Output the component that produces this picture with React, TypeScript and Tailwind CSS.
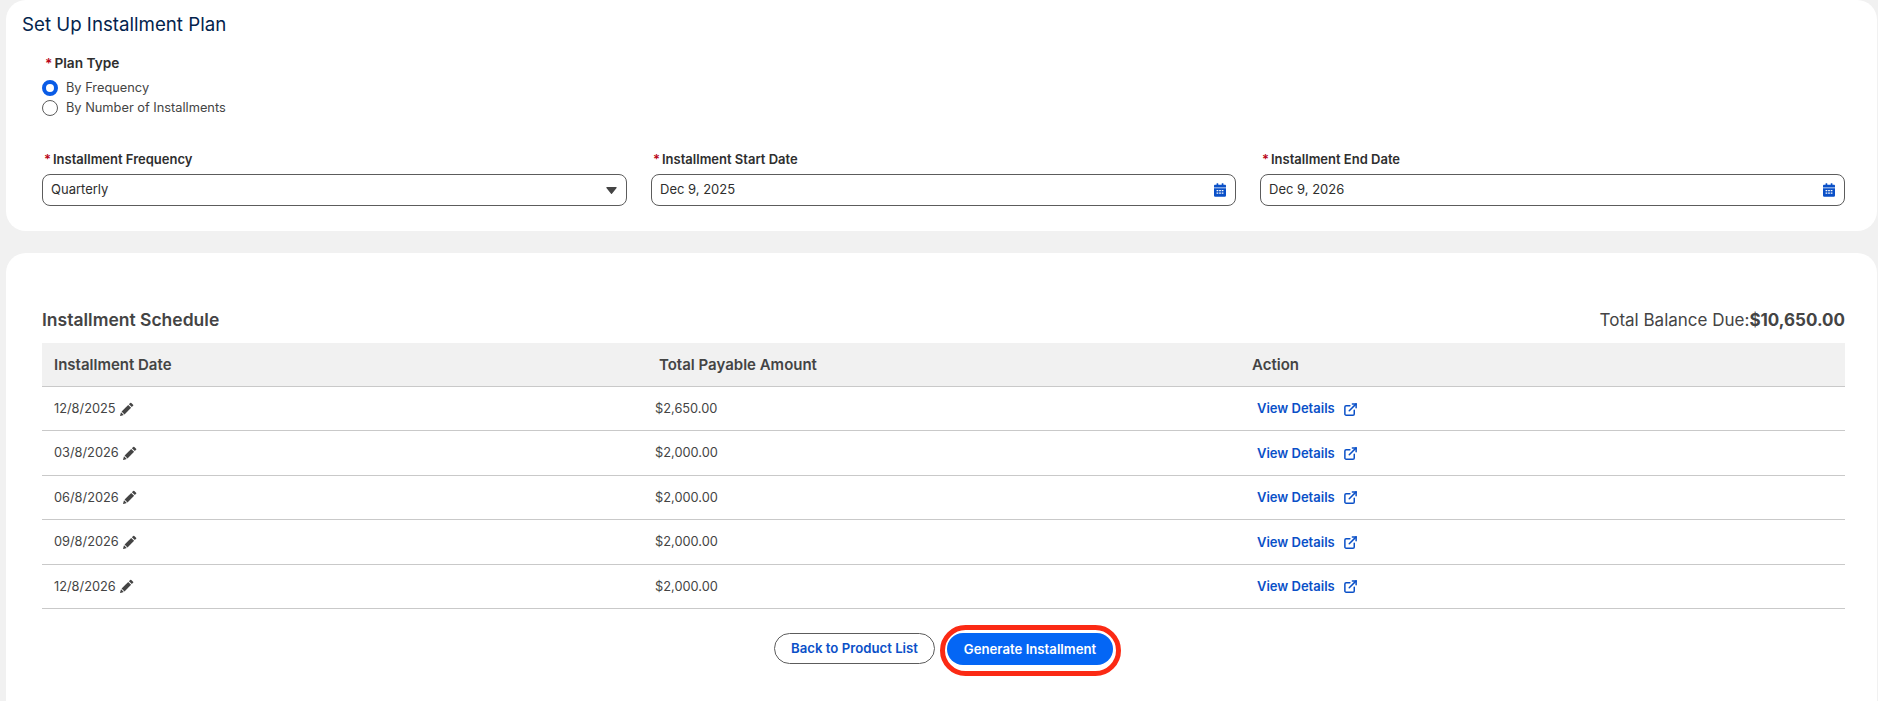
import { ExternalLink } from 'lucide-react'

const rows = [
  { date: '12/8/2025', amount: '$2,650.00' },
  { date: '03/8/2026', amount: '$2,000.00' },
  { date: '06/8/2026', amount: '$2,000.00' },
  { date: '09/8/2026', amount: '$2,000.00' },
  { date: '12/8/2026', amount: '$2,000.00' },
]

function Label({ text }: { text: string }) {
  return (
    <div className="flex items-center pl-[2px] text-[13px] leading-[18px] font-semibold text-[#2e2e2e]">
      <span className="mr-[2px] text-[#ba0517]">*</span>
      {text}
    </div>
  )
}

function CalendarIcon() {
  return (
    <svg width="12" height="14" viewBox="0 0 14 16" fill="#0a50c8">
      <rect x="3" y="0" width="2" height="3" rx="0.5" />
      <rect x="9" y="0" width="2" height="3" rx="0.5" />
      <path d="M1 2h12a1 1 0 0 1 1 1v2H0V3a1 1 0 0 1 1-1z" />
      <path
        fillRule="evenodd"
        d="M0 6h14v8.500a1.500 1.500 0 0 1-1.500 1.500h-11A1.500 1.500 0 0 1 0 14.500zM3 8v1.500h2V8zm3 0v1.500h2V8zm3 0v1.500h2V8zm-6 3v1.500h2V11zm3 0v1.500h2V11zm3 0v1.500h2V11z"
      />
    </svg>
  )
}

function PencilIcon() {
  return (
    <svg width="14" height="14" viewBox="0 0 14 14" fill="#444444">
      <path d="M10.200.900a.8.8 0 0 1 1.100 0l1.800 1.800a.8.8 0 0 1 0 1.100l-1.300 1.300-2.900-2.900z" />
      <path d="M8.200 2.900l2.900 2.900-6.600 6.600-2.900-2.900z" />
      <path d="M1 10.200l2.800 2.800-3.300.9a.3.3 0 0 1-.4-.4z" />
    </svg>
  )
}

function DateField({ label, value }: { label: string; value: string }) {
  return (
    <div>
      <Label text={label} />
      <div className="mt-[6px] flex h-[32px] items-center justify-between rounded-[8px] border border-[#5c5c5c] pl-[8px] pr-[9px] text-[13px] text-[#2e2e2e]">
        <span>{value}</span>
        <CalendarIcon />
      </div>
    </div>
  )
}

export default function App() {
  return (
    <div className="h-[701px] overflow-hidden bg-[#f1f1f1] pl-[6px] pr-[1px] font-['Inter',sans-serif]">
      <section className="h-[231px] rounded-[20px] bg-white">
        <h1 className="pl-[16px] pt-[13px] text-[18.700px] leading-[24px] text-[#03234d]">Set Up Installment Plan</h1>

        <div className="pl-[39px] pt-[17px] text-[13.700px] leading-[18px] font-semibold text-[#2e2e2e]">
          <span className="mr-[2px] text-[#ba0517]">*</span>
          Plan Type
        </div>
        <div className="mt-[6px] pl-[36px] text-[12.800px] leading-[20px] text-[#444444]">
          <div className="flex items-center gap-[8px]">
            <span className="h-[16px] w-[16px] rounded-full border-[4px] border-[#0a5ce6] bg-white" />
            By Frequency
          </div>
          <div className="flex items-center gap-[8px]">
            <span className="h-[16px] w-[16px] rounded-full border border-[#5c5c5c] bg-white" />
            By Number of Installments
          </div>
        </div>

        <div className="mt-[32px] grid grid-cols-3 gap-x-[24px] pl-[36px] pr-[32px]">
          <div>
            <Label text="Installment Frequency" />
            <div className="mt-[6px] flex h-[32px] items-center justify-between rounded-[8px] border border-[#5c5c5c] pl-[8px] pr-[9px] text-[13px] text-[#2e2e2e]">
              <span>Quarterly</span>
              <svg width="11" height="7" viewBox="0 0 12 8" fill="#444444">
                <path d="M.700 0h10.600c.500 0 .800.600.500 1L6.500 7.600a.6.6 0 0 1-1 0L.200 1C-.100.600.200 0 .700 0z" />
              </svg>
            </div>
          </div>
          <DateField label="Installment Start Date" value="Dec 9, 2025" />
          <DateField label="Installment End Date" value="Dec 9, 2026" />
        </div>
      </section>

      <section className="mt-[22px] h-[470px] rounded-[20px] bg-white pl-[36px] pr-[32px] pt-[55px]">
        <div className="flex items-center justify-between text-[#444444]">
          <h2 className="text-[17.500px] leading-[24px] font-semibold">Installment Schedule</h2>
          <div className="text-[17px] leading-[24px]">
            Total Balance Due:<span className="font-bold">$10,650.00</span>
          </div>
        </div>

        <div className="mt-[11px] grid h-[44px] grid-cols-[605px_593px_1fr] items-center border-b border-[#c9c9c9] bg-[#f1f1f1] pt-[1px] text-[15px] font-semibold text-[#444444]">
          <div className="pl-[12px]">Installment Date</div>
          <div className="pl-[12px]">Total Payable Amount</div>
          <div className="pl-[12px]">Action</div>
        </div>

        {rows.map((row) => (
          <div
            key={row.date}
            className="grid h-[44.400px] grid-cols-[605px_593px_1fr] items-center border-b border-[#c9c9c9] text-[12.800px] text-[#444444]"
          >
            <div className="flex items-center gap-[4px] pl-[12px]">
              {row.date}
              <PencilIcon />
            </div>
            <div className="pl-[8px]">{row.amount}</div>
            <div className="flex items-center gap-[8px] pl-[17px] pt-[1px] text-[13px] font-semibold text-[#0a50c8]">
              View Details
              <ExternalLink size={15} strokeWidth={2.4} />
            </div>
          </div>
        ))}

        <div className="mt-[16px] flex items-start justify-center gap-[5px] pl-[8px] text-[13.200px] font-semibold">
          <button className="mt-[8px] h-[31px] w-[161px] rounded-full border border-[#5c5c5c] bg-white pt-[1px] text-[#0a50c8]">
            Back to Product List
          </button>
          <div className="rounded-full border-[5px] border-[#fb2a14] pb-[6px] pl-[2px] pr-[3px] pt-[3px]">
            <button className="block h-[32px] w-[166px] rounded-full bg-[#0466f5] pt-[1px] text-white">
              Generate Installment
            </button>
          </div>
        </div>
      </section>
    </div>
  )
}
